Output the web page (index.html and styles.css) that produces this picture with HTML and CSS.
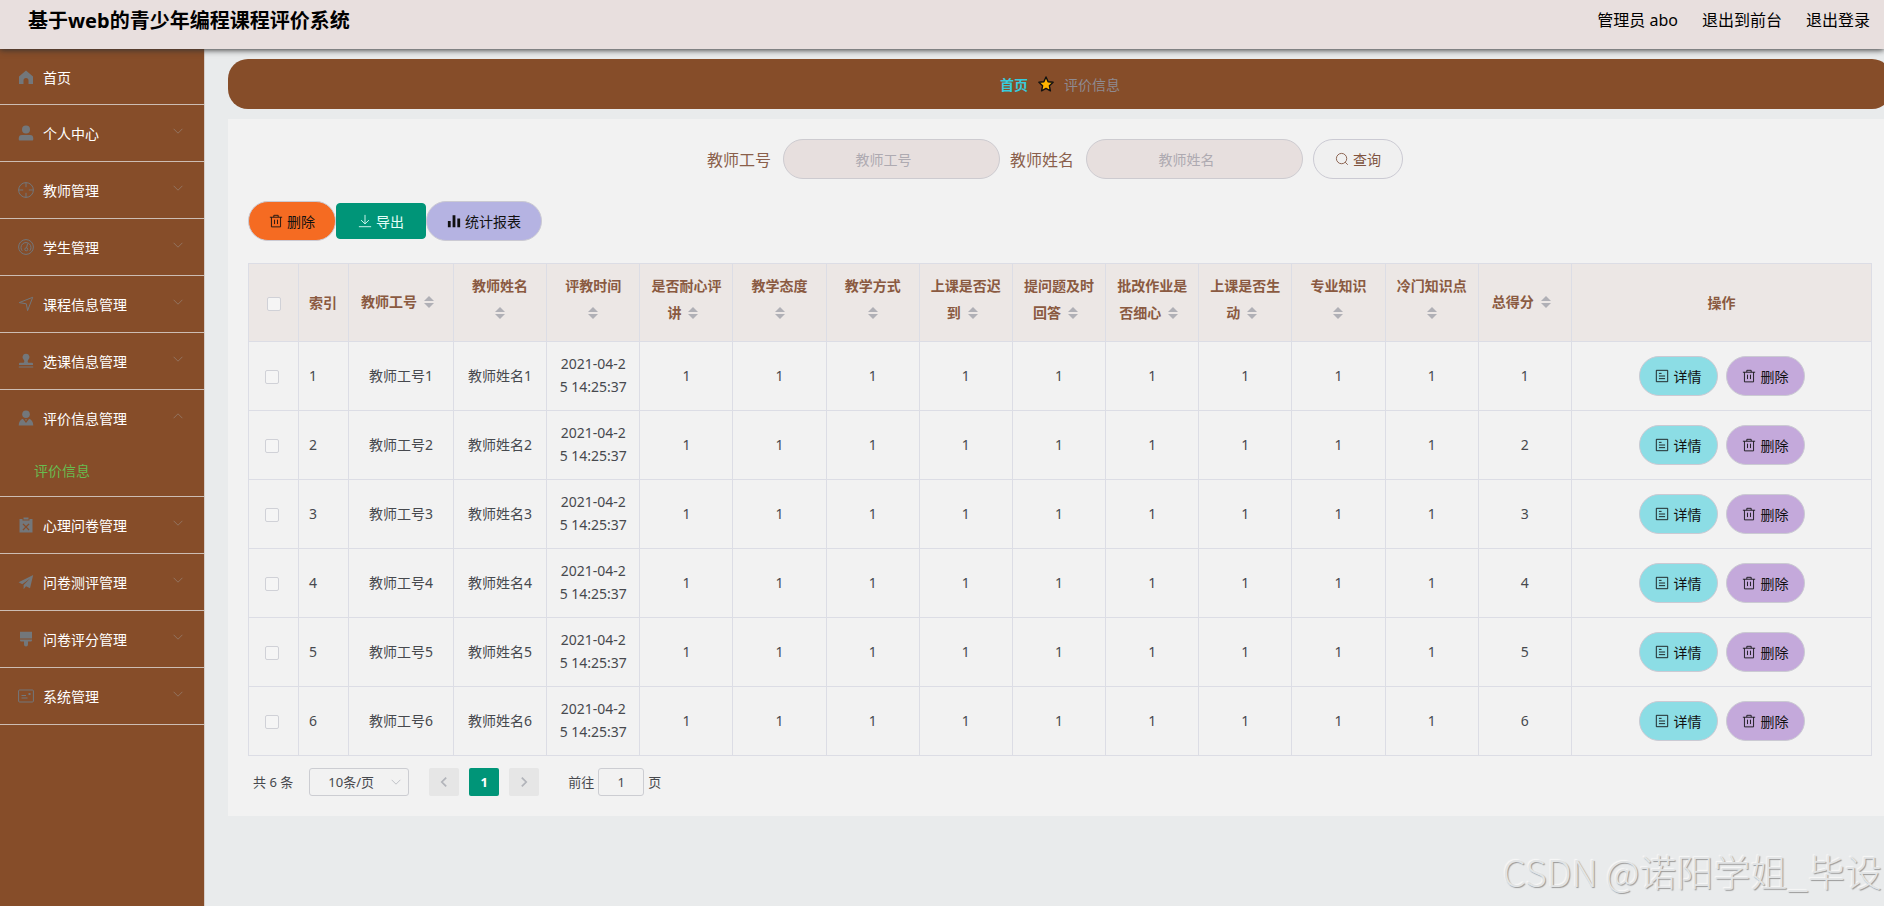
FILE: index.html
```html
<!DOCTYPE html>
<html lang="zh-CN">
  <head>
    <meta charset="UTF-8" />
    <meta name="viewport" content="width=device-width, initial-scale=1.0" />
    <link rel="stylesheet" href="styles.css">
    <title>基于web的青少年编程课程评价系统</title>
  </head>
  <body>
    <!-- 图标 -->
    <svg width="0" height="0" class="sprite">
      <symbol id="i-home" viewBox="0 0 16 16"><path class="solid" d="M8 1.500 1 7.500V15h4.500v-3.500a2.500 2.500 0 0 1 5 0V15H15V7.500z"/></symbol>
      <symbol id="i-user" viewBox="0 0 16 16"><circle class="solid" cx="8" cy="4.500" r="4"/><path class="solid" d="M.8 14.800v-1.600c0-2 1-3.200 3-3.200h8.400c2 0 3 1.200 3 3.200v1.600q0 .7-.7.7h-13q-.7 0-.7-.7z"/></symbol>
      <symbol id="i-aim" viewBox="0 0 16 16"><circle cx="8" cy="8" r="7.400"/><path d="M8 .6v4.600M8 10.800v4.600M.6 8h4.600M10.800 8h4.600"/></symbol>
      <symbol id="i-gauge" viewBox="0 0 16 16"><circle cx="8" cy="8" r="7.400"/><path d="M4.200 11.800A5 5 0 1 1 11.800 11.800M8.600 8.800l1-4.300"/><circle cx="8.300" cy="10.300" r="1.500"/></symbol>
      <symbol id="i-position" viewBox="0 0 16 16"><path d="M1.200 6.600 14.700 1.300 9.600 14.600 8.300 7.800z"/></symbol>
      <symbol id="i-stamp" viewBox="0 0 16 16"><path class="solid" d="M8 .8a3.500 3.500 0 0 1 2 6.400c-.5 1-.4 2 .4 2.500H14q1 0 1 1V12H1v-1.300q0-1 1-1h3.600c.8-.5.9-1.500.4-2.500A3.500 3.500 0 0 1 8 .8zM.8 13.400h14.400v1.200H.8z"/></symbol>
      <symbol id="i-custom" viewBox="0 0 16 16"><circle class="solid" cx="8" cy="4.200" r="3.800"/><path class="solid" d="M4.800 8.800 8 13l3.200-4.200c2.700 1 3.900 3.200 4.100 6.600H.7c.2-3.400 1.400-5.600 4.100-6.600zM7 9.300h2L8 11z"/></symbol>
      <symbol id="i-clip" viewBox="0 0 16 16"><path class="solid" fill-rule="evenodd" d="M1.500 2h3v1.500h7V2h3v13.500h-13zm3.900 4.400-.9.900L7.100 9.900l-2.600 2.600.9.900L8 10.800l2.600 2.600.9-.9-2.600-2.600 2.600-2.600-.9-.9L8 9z"/><path class="solid" d="M5.500.5h5v2h-5z"/></symbol>
      <symbol id="i-plane" viewBox="0 0 16 16"><path class="solid" d="M15.200.9.600 8.300l3.700 1.900L12 4.500 5.600 11v4.300L8 12.200l4 2z"/></symbol>
      <symbol id="i-brush" viewBox="0 0 16 16"><path class="solid" d="M2 .8h12v6.700H2zM2 8.500h12v.8q0 1.200-1.200 1.200H10v3q0 2-2 2t-2-2v-3H3.200Q2 10.500 2 9.300z"/></symbol>
      <symbol id="i-card" viewBox="0 0 16 16"><rect x=".6" y="2" width="14.800" height="12" rx="1"/><path d="M3.500 7.500h4.500M3.500 10h6"/><path class="solid" d="M10.500 5h2v2h-2z"/></symbol>
      <symbol id="i-down" viewBox="0 0 16 16"><path d="m3 5.500 5 5 5-5"/></symbol>
      <symbol id="i-up" viewBox="0 0 16 16"><path d="m3 10.500 5-5 5 5"/></symbol>
      <symbol id="i-left" viewBox="0 0 16 16"><path d="m10.500 3-5 5 5 5"/></symbol>
      <symbol id="i-right" viewBox="0 0 16 16"><path d="m5.500 3 5 5-5 5"/></symbol>
      <symbol id="i-search" viewBox="0 0 16 16"><circle cx="7.500" cy="7.500" r="5.900"/><path d="m11.600 11.600 3 3"/></symbol>
      <symbol id="i-delete" viewBox="0 0 16 16"><path d="M1 3.700h14M5.500 3.500v-2h5v2M2.800 3.700v11h10.400v-11M6.300 6.500v5M9.700 6.500v5"/></symbol>
      <symbol id="i-download" viewBox="0 0 16 16"><path d="M8 1v10M3.500 7 8 11.300 12.500 7M1 14.500h14"/></symbol>
      <symbol id="i-data" viewBox="0 0 16 16"><path class="solid" d="M1 8h3.200v7H1zM6.400 1.500h3.200V15H6.400zM11.800 5H15v10h-3.200z"/></symbol>
      <symbol id="i-doc" viewBox="0 0 16 16"><path d="M1.500 1.500h13v13h-13zM4.500 5h3M4.500 8h7M4.500 11h7"/></symbol>
      <symbol id="i-star" viewBox="0 0 16 16"><path fill="#ffb400" stroke="#111" stroke-width="1.400" stroke-linejoin="round" d="m8 1 2.100 4.700 5 .6-3.700 3.500 1 5L8 12.400l-4.400 2.400 1-5L.9 6.300l5-.6z"/></symbol>
    </svg>

    <header class="header">
      <h1 class="title">基于web的青少年编程课程评价系统</h1>
      <nav class="user-nav">
        <span>管理员 abo</span>
        <a href="#">退出到前台</a>
        <a href="#">退出登录</a>
      </nav>
    </header>

    <div class="container">
      <aside class="sidebar">
        <ul class="menu">
          <li><a href="#"><svg class="icon"><use href="#i-home"/></svg>首页</a></li>
          <li><a href="#"><svg class="icon"><use href="#i-user"/></svg>个人中心<svg class="arrow"><use href="#i-down"/></svg></a></li>
          <li><a href="#"><svg class="icon"><use href="#i-aim"/></svg>教师管理<svg class="arrow"><use href="#i-down"/></svg></a></li>
          <li><a href="#"><svg class="icon"><use href="#i-gauge"/></svg>学生管理<svg class="arrow"><use href="#i-down"/></svg></a></li>
          <li><a href="#"><svg class="icon"><use href="#i-position"/></svg>课程信息管理<svg class="arrow"><use href="#i-down"/></svg></a></li>
          <li><a href="#"><svg class="icon"><use href="#i-stamp"/></svg>选课信息管理<svg class="arrow"><use href="#i-down"/></svg></a></li>
          <li>
            <a href="#"><svg class="icon"><use href="#i-custom"/></svg>评价信息管理<svg class="arrow"><use href="#i-up"/></svg></a>
            <a href="#" class="sub">评价信息</a>
          </li>
          <li><a href="#"><svg class="icon"><use href="#i-clip"/></svg>心理问卷管理<svg class="arrow"><use href="#i-down"/></svg></a></li>
          <li><a href="#"><svg class="icon"><use href="#i-plane"/></svg>问卷测评管理<svg class="arrow"><use href="#i-down"/></svg></a></li>
          <li><a href="#"><svg class="icon"><use href="#i-brush"/></svg>问卷评分管理<svg class="arrow"><use href="#i-down"/></svg></a></li>
          <li><a href="#"><svg class="icon"><use href="#i-card"/></svg>系统管理<svg class="arrow"><use href="#i-down"/></svg></a></li>
        </ul>
      </aside>

      <main class="main">
        <nav class="breadcrumb">
          <a href="#">首页</a>
          <svg class="star"><use href="#i-star"/></svg>
          <span>评价信息</span>
        </nav>

        <section class="card">
          <form class="search">
            <div class="field">
              <label for="gonghao">教师工号</label>
              <input type="text" id="gonghao" placeholder="教师工号">
            </div>
            <div class="field">
              <label for="xingming">教师姓名</label>
              <input type="text" id="xingming" placeholder="教师姓名">
            </div>
            <button type="button" class="btn btn-search"><svg><use href="#i-search"/></svg>查询</button>
          </form>

          <div class="toolbar">
            <button type="button" class="btn btn-remove"><svg><use href="#i-delete"/></svg>删除</button>
            <button type="button" class="btn btn-export"><svg><use href="#i-download"/></svg>导出</button>
            <button type="button" class="btn btn-report"><svg><use href="#i-data"/></svg>统计报表</button>
          </div>

          <table class="table">
            <colgroup>
              <col class="col-small"><col class="col-small"><col class="col-id">
              <col span="12">
              <col class="col-action">
            </colgroup>
            <thead>
              <tr>
                <th><input type="checkbox" aria-label="全选"></th>
                <th class="left">索引</th>
                <th>教师工号<span class="sort"></span></th>
                <th>教师姓名<span class="sort"></span></th>
                <th>评教时间<span class="sort"></span></th>
                <th>是否耐心评讲<span class="sort"></span></th>
                <th>教学态度<span class="sort"></span></th>
                <th>教学方式<span class="sort"></span></th>
                <th>上课是否迟到<span class="sort"></span></th>
                <th>提问题及时回答<span class="sort"></span></th>
                <th>批改作业是否细心<span class="sort"></span></th>
                <th>上课是否生动<span class="sort"></span></th>
                <th>专业知识<span class="sort"></span></th>
                <th>冷门知识点<span class="sort"></span></th>
                <th>总得分<span class="sort"></span></th>
                <th>操作</th>
              </tr>
            </thead>
            <tbody id="rows"></tbody>
          </table>

          <div class="pagination">
            <span class="total">共 6 条</span>
            <div class="size">
              <select aria-label="每页条数"><option>10条/页</option></select>
              <svg><use href="#i-down"/></svg>
            </div>
            <button type="button" class="page" disabled aria-label="上一页"><svg><use href="#i-left"/></svg></button>
            <button type="button" class="page active">1</button>
            <button type="button" class="page" disabled aria-label="下一页"><svg><use href="#i-right"/></svg></button>
            <div class="jump">
              <label for="jump">前往</label>
              <input type="text" id="jump" value="1">
              <span>页</span>
            </div>
          </div>
        </section>
      </main>
    </div>

    <div class="watermark">CSDN @诺阳学姐_毕设</div>

    <script>
      // 生成表格数据
      const rows = document.getElementById("rows");
      for (let i = 1; i <= 6; i++) {
        const tr = document.createElement("tr");
        tr.innerHTML =
          `<td class="check"><input type="checkbox" aria-label="选择第${i}行"></td>` +
          `<td class="left">${i}</td>` +
          `<td>教师工号${i}</td>` +
          `<td>教师姓名${i}</td>` +
          `<td>2021-04-25 14:25:37</td>` +
          "<td>1</td>".repeat(9) +
          `<td>${i}</td>` +
          `<td class="ops"><div class="actions">
            <button type="button" class="btn btn-detail"><svg><use href="#i-doc"/></svg>详情</button>
            <button type="button" class="btn btn-del"><svg><use href="#i-delete"/></svg>删除</button>
          </div></td>`;
        rows.appendChild(tr);
      }
    </script>
  </body>
</html>
```
FILE: styles.css
```css
/* 基本设置 */
* {
  margin: 0;
  padding: 0;
  box-sizing: border-box;
}

body {
  font-family: "Noto Sans", "Noto Sans CJK SC", sans-serif;
  font-size: 14px;
  color: #47494e;
  background-color: #e9ebec;
  display: flex;
  flex-direction: column;
  min-height: 100vh;
  overflow: hidden;
  position: relative;
}

a {
  color: inherit;
  text-decoration: none;
}

svg {
  fill: none;
  stroke: currentColor;
}

.solid {
  fill: currentColor;
  stroke: none;
}

.sprite {
  position: absolute;
}

input,
select,
button {
  font-family: inherit;
  font-size: 14px;
  color: inherit;
}

/* 顶部 */
.header {
  display: flex;
  justify-content: space-between;
  height: 49px;
  padding: 0 14px 8px 28px;
  align-items: center;
  background-color: #e8dfde;
  color: #000;
  box-shadow: 0 1px 6px #333;
  position: relative;
  z-index: 1;
}

.title {
  font-size: 20px;
  line-height: 28px;
}

.user-nav {
  display: flex;
  gap: 24px;
  padding-bottom: 2px;
  font-size: 16px;
  line-height: 24px;
}

.container {
  display: flex;
  flex: 1;
}

/* 侧边栏 */
.sidebar {
  flex: none;
  width: 205px;
  background-color: #864d29;
  border-right: 1px solid #d5cdc9;
  color: #fff;
}

.menu {
  list-style: none;
}

.menu li {
  border-bottom: 1px solid #cdbdb3;
}

.menu li a {
  display: flex;
  align-items: center;
  height: 56px;
  padding: 0 19px 0 18px;
}

.menu li:first-child a {
  height: 55px;
}

.menu li .sub {
  height: 50px;
  padding: 0 0 2px 34px;
  color: #68bb50;
}

.icon {
  width: 16px;
  height: 16px;
  margin-right: 9px;
  color: #73777b;
}

.arrow {
  width: 14px;
  height: 14px;
  margin: 0 0 4px auto;
  color: #957766;
}

/* 主体 */
.main {
  flex: 1;
  min-width: 0;
  margin: 10px -8px 0 23px;
}

.breadcrumb {
  display: flex;
  justify-content: center;
  align-items: center;
  gap: 10px;
  height: 50px;
  margin-bottom: 10px;
  border-radius: 20px;
  background-color: #864d29;
  color: #8f8a90;
}

.breadcrumb a {
  color: #37cbdc;
  font-weight: bold;
}

.star {
  width: 16px;
  height: 16px;
}

.card {
  padding: 20px;
  background-color: #f2f2f2;
}

/* 查询 */
.search {
  display: flex;
  justify-content: center;
  align-items: center;
  gap: 10px;
  padding-right: 10px;
  margin-bottom: 22px;
  color: #8a5f4b;
}

.field {
  display: flex;
  align-items: center;
  gap: 12px;
  font-size: 16px;
}

.field input {
  width: 217px;
  height: 40px;
  padding: 0 30px 0 14px;
  border: 1px solid #cdcbd0;
  border-radius: 20px;
  background-color: #e7dfde;
  text-align: center;
}

.field input::placeholder {
  color: #aeaab1;
}

/* 按钮 */
.btn {
  display: inline-flex;
  align-items: center;
  justify-content: center;
  gap: 4px;
  height: 40px;
  padding: 0 20px;
  border: 1px solid #cbcad3;
  border-radius: 20px;
  color: #111;
}

.btn svg {
  width: 14px;
  height: 14px;
}

.btn-search {
  padding: 0 21px;
  background-color: #f0f0f0;
  color: #80543f;
}

.toolbar {
  display: flex;
  align-items: center;
  margin-bottom: 22px;
}

.btn-remove {
  background-color: #f56b22;
}

.btn-export {
  height: 36px;
  padding: 0 21px;
  border-color: #009578;
  border-radius: 4px;
  background-color: #009578;
  color: #e4fff9;
}

.btn-report {
  background-color: #b5b3e2;
}

.btn-detail {
  background-color: #8cdde5;
}

.btn-del {
  background-color: #c4a9db;
}

.actions {
  display: flex;
  justify-content: center;
  gap: 8px;
}

.actions .btn {
  gap: 5px;
  padding: 0 15px;
}

/* 表格 */
.table {
  width: 100%;
  table-layout: fixed;
  border-collapse: collapse;
  line-height: 23px;
}

.table th,
.table td {
  padding: 10px;
  border: 1px solid #dcdde5;
  text-align: center;
  word-break: break-all;
}

.table th {
  height: 78px;
  background-color: #ece7e5;
  color: #8a5a41;
  font-weight: bold;
}

.table td {
  height: 69px;
  padding-bottom: 12px;
}

.table .ops {
  padding-bottom: 10px;
}

.table .left {
  text-align: left;
}

.table .check {
  padding-right: 14px;
}

.table .col-small {
  width: 50px;
}

.table .col-id {
  width: 105px;
}

.table .col-action {
  width: 300px;
}

.table input {
  appearance: none;
  display: inline-block;
  width: 14px;
  height: 14px;
  border: 1px solid #d0d1d7;
  border-radius: 2px;
  background-color: #f5f5f5;
  vertical-align: middle;
}

/* 排序箭头 */
.sort {
  display: inline-flex;
  flex-direction: column;
  align-items: center;
  justify-content: center;
  gap: 2px;
  width: 24px;
  height: 34px;
  padding-bottom: 2px;
  vertical-align: middle;
}

.sort::before,
.sort::after {
  content: "";
  border: 5px solid transparent;
}

.sort::before {
  border-top: 0;
  border-bottom-color: #b0b0b6;
}

.sort::after {
  border-bottom: 0;
  border-top-color: #b0b0b6;
}

/* 分页 */
.pagination {
  display: flex;
  align-items: center;
  gap: 10px;
  padding: 12px 5px 0;
  font-size: 13px;
  line-height: 28px;
}

.pagination input,
.pagination select {
  appearance: none;
  height: 28px;
  border: 1px solid #cccdd2;
  border-radius: 3px;
  background-color: #f2f2f2;
  font-size: 13px;
  text-align: center;
}

.size {
  display: flex;
  align-items: center;
  position: relative;
  margin: 0 10px 0 6px;
}

.size select {
  width: 100px;
  padding-right: 16px;
}

.size svg {
  position: absolute;
  right: 6px;
  width: 14px;
  height: 14px;
  color: #b8bac0;
}

.page {
  display: flex;
  align-items: center;
  justify-content: center;
  width: 30px;
  height: 28px;
  border: 0;
  border-radius: 2px;
  background-color: #e6e6e6;
  color: #b2b4ba;
  font-size: 13px;
  font-weight: bold;
}

.page svg {
  width: 14px;
  height: 14px;
  stroke-width: 2;
}

.page.active {
  background-color: #009578;
  color: #fff;
}

.jump {
  display: flex;
  align-items: center;
  gap: 4px;
  margin-left: 19px;
}

.jump input {
  width: 46px;
}

/* 水印 */
.watermark {
  position: absolute;
  right: 2px;
  bottom: 11px;
  font-family: "Noto Sans CJK SC", sans-serif;
  font-size: 37px;
  font-weight: 300;
  line-height: 48px;
  color: #e2e4e5;
  text-shadow: 1px 1px 1px #999, -1px -1px 1px #f8f8f8;
}
```
